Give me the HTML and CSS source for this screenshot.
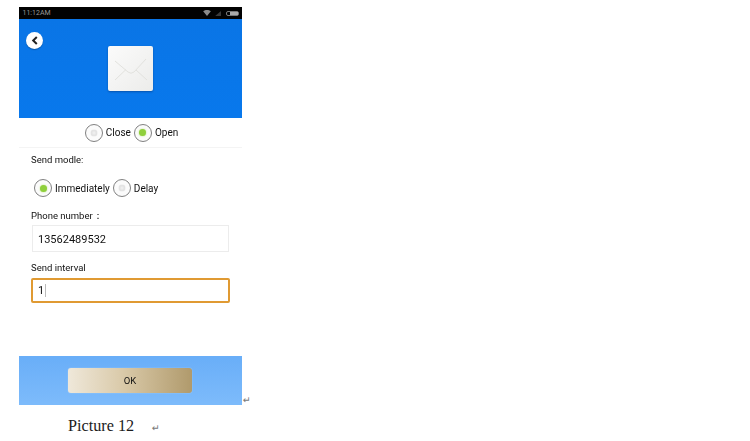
FILE: index.html
```html
<!DOCTYPE html>
<html lang="en">
<head>
<meta charset="utf-8">
<title>Picture 12</title>
<link rel="stylesheet" href="styles.css">
</head>
<body>
<div class="doc">
  <div class="phone-row">
    <div class="phone">
      <div class="status">
        <span class="time">11:12AM</span>
        <span class="status-icons">
          <svg class="wifi" width="8" height="6" viewBox="0 0 9 7"><path d="M0 1.5 C2.5-.5 6.5-.5 9 1.5L4.5 7Z" fill="#8a8a8a"/></svg>
          <svg class="signal" width="7" height="5" viewBox="0 0 8 6"><path d="M0 6 L7 0 V6Z" fill="#3a3a3a"/></svg>
          <span class="battery"><span class="battery-fill"></span></span>
        </span>
      </div>
      <div class="hero">
        <span class="back">
          <svg width="8" height="9" viewBox="0 0 8 9"><path d="M5.8 1 L2.2 4.5 L5.8 8" fill="none" stroke="#222" stroke-width="2"/></svg>
        </span>
        <div class="envelope">
          <svg width="34" height="26" viewBox="0 0 34 26"><path d="M1 5 L14 16 Q17 18.5 20 16 L32 3 M1 24 L12 13.5 M33 24 L22 14" fill="none" stroke="#e2e2de" stroke-width="1"/></svg>
        </div>
      </div>
      <div class="switch-row">
        <span class="radio"><span class="dot off"></span></span><span class="label">Close</span>
        <span class="radio"><span class="dot on"></span></span><span class="label">Open</span>
      </div>
      <div class="form">
        <div class="field-label first">Send modle:</div>
        <div class="mode-row">
          <span class="radio"><span class="dot on"></span></span><span class="label">Immediately</span>
          <span class="radio"><span class="dot off"></span></span><span class="label">Delay</span>
        </div>
        <div class="field-label phone-label">Phone number：</div>
        <div class="input plain">13562489532</div>
        <div class="field-label interval-label">Send interval</div>
        <div class="input focus">1<span class="caret"></span></div>
      </div>
      <div class="footer">
        <div class="ok">OK</div>
      </div>
    </div>
    <span class="mark para-one">↵</span>
  </div>
  <div class="caption"><span>Picture 12</span><span class="mark para-two">↵</span></div>
</div>
</body>
</html>
```
FILE: styles.css
```css
* { box-sizing: border-box; }
html, body { margin: 0; padding: 0; background: #fff; }
body { width: 750px; height: 441px; overflow: hidden; font-family: "Roboto", "Liberation Sans", sans-serif; color: #111; }
.doc { padding: 7px 0 0 19px; }
.phone-row { display: flex; align-items: flex-end; }
.phone { width: 223px; height: 398px; display: flex; flex-direction: column; filter: blur(0.3px); }
.status { height: 12px; background: #020202; display: flex; align-items: center; justify-content: space-between; padding: 0 3px 0 3.5px; }
.time { font-size: 7px; color: #999; }
.status-icons { display: flex; align-items: center; gap: 4px; }
.battery { width: 13px; height: 5px; border: 1px solid #777; border-radius: 2px; display: flex; justify-content: flex-end; }
.battery-fill { width: 8px; background: #aaa; }
.hero { height: 99px; background: linear-gradient(#0a75e6, #0878ec); display: flex; justify-content: center; padding-top: 27px; position: relative; }
.back { position: absolute; left: 7px; top: 13px; width: 17px; height: 17px; border-radius: 50%; background: #fff; display: flex; align-items: center; justify-content: center; box-shadow: 0 1px 1px rgba(0,0,0,.25); }
.envelope { width: 45px; height: 45px; border-radius: 2px; background: linear-gradient(135deg, #fbfbfb, #ececea); box-shadow: 0 1px 2px rgba(0,40,100,.45); display: flex; align-items: center; justify-content: center; }
.switch-row { height: 30px; display: flex; align-items: center; justify-content: center; padding-left: 5px; border-bottom: 1px solid #f4f4f4; }
.radio { width: 18px; height: 18px; border: 1px solid #808080; border-radius: 50%; display: flex; align-items: center; justify-content: center; background: #fbfbfb; flex: none; }
.dot { width: 7px; height: 7px; border-radius: 50%; }
.dot.off { background: radial-gradient(#f2f2f2, #d6d6d6); box-shadow: 0 0 1px #aaa; width: 6px; height: 6px; }
.dot.on { background: #8fcf3c; box-shadow: 0 0 2px #b7e27f; }
.label { font-size: 10px; margin: 0 3px 0 3px; }
.form { flex: 1; padding-left: 12px; display: flex; flex-direction: column; }
.field-label { font-size: 9.5px; line-height: 12px; }
.field-label.first { margin-top: 6px; }
.mode-row { display: flex; align-items: center; height: 18px; margin: 13px 0 0 3px; }
.phone-label { margin-top: 13px; }
.input { font-size: 11px; display: flex; align-items: center; color: #111; background: #fff; }
.input.plain { width: 197px; height: 27px; margin: 3px 0 0 1px; border: 1px solid #ececec; padding: 1px 0 0 5px; }
.interval-label { margin-top: 10px; }
.input.focus { width: 199px; height: 25px; margin-top: 4px; border: 2px solid #e09a32; border-radius: 2px; padding-left: 5px; }
.caret { width: 1px; height: 13px; background: #bbb; margin-left: 1px; }
.footer { height: 49px; background: linear-gradient(#69aef8, #7dbbfb); display: flex; align-items: center; justify-content: center; padding-right: 1px; }
.ok { width: 124px; height: 25px; border-radius: 3px; background: linear-gradient(90deg, #efe8da, #d9c9a8 45%, #b09a6c); box-shadow: 0 0 1px rgba(255,255,255,.7); font-size: 9.5px; display: flex; align-items: center; justify-content: center; color: #111; }
.mark { font-family: "DejaVu Sans", sans-serif; font-size: 9.5px; color: #777; line-height: 10px; }
.para-one { margin-left: 1px; }
.caption { display: flex; align-items: center; padding-left: 49px; height: 30px; margin-top: 6px; font-family: "Liberation Serif", serif; font-size: 16.2px; color: #1c1c1c; }
.para-two { margin-left: 18px; margin-top: 3px; }
```
